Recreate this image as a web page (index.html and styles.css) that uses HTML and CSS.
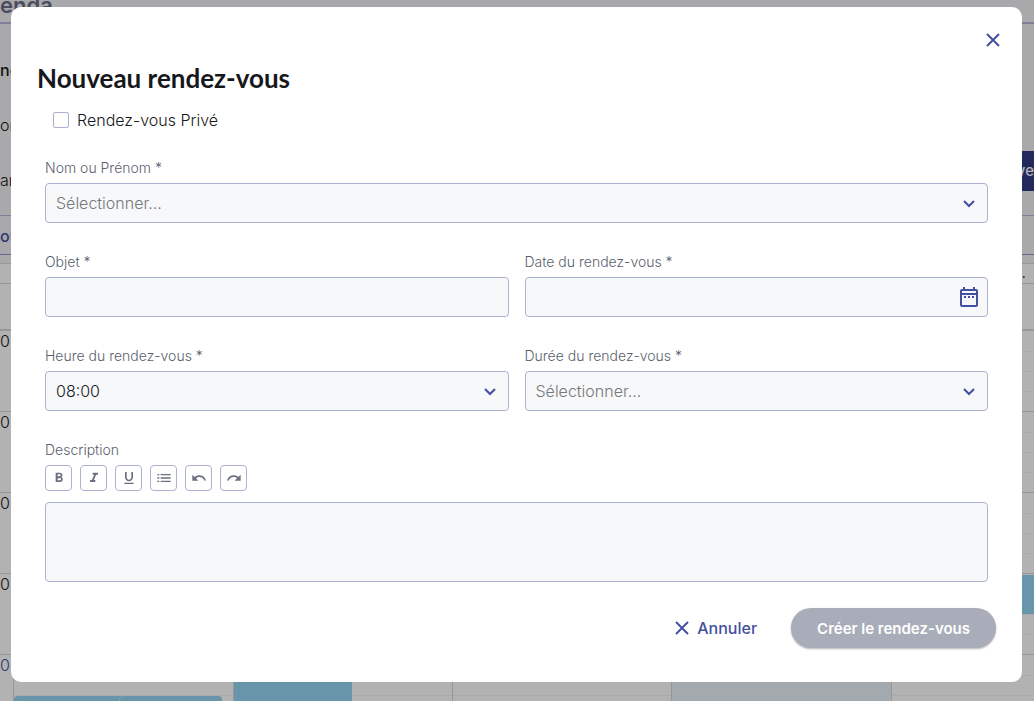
FILE: index.html
```html
<!DOCTYPE html>
<html lang="fr">
<head>
  <meta charset="UTF-8" />
  <meta name="viewport" content="width=device-width, initial-scale=1.0"/>
  <title>Nouveau rendez-vous</title>
  <link rel="stylesheet" href="styles.css">
</head>
<body>
  <div class="agenda">
    <div class="agenda-header">enda</div>
    <div class="agenda-filters">
      <div class="filters-left">
        <strong>nc</strong>
        <span>or</span>
        <span>ar</span>
      </div>
      <div class="agenda-new">ve</div>
    </div>
    <div class="agenda-tabs">ou</div>
    <div class="calendar">
      <div class="calendar-head"><span>.</span></div>
      <div class="calendar-allday"></div>
      <div class="calendar-grid">
        <div class="hours">
          <span>0</span>
          <span>0</span>
          <span>0</span>
          <span>0</span>
          <span class="now">0</span>
        </div>
        <div class="day">
          <div class="event event-left"></div>
          <div class="event event-right"></div>
        </div>
        <div class="day"><div class="event event-half"></div></div>
        <div class="day"></div>
        <div class="day today"></div>
        <div class="day"><div class="event event-short"></div></div>
      </div>
    </div>
  </div>

  <div class="overlay">
    <form class="modal" role="dialog" aria-labelledby="modalTitle">
      <div class="modal-top">
        <button type="button" class="icon-btn" aria-label="Fermer">
          <svg class="cross" viewBox="0 0 14 14"><path d="M1 1l12 12M13 1L1 13"/></svg>
        </button>
      </div>
      <h1 id="modalTitle">Nouveau rendez-vous</h1>

      <div class="fields">
        <div class="private">
          <input type="checkbox" id="private">
          <label for="private">Rendez-vous Privé</label>
        </div>

        <div class="field wide">
          <label for="name">Nom ou Prénom *</label>
          <div class="control">
            <select id="name" class="empty"><option>Sélectionner...</option></select>
            <svg class="chevron" viewBox="0 0 12 8"><path d="M1 1l5 5 5-5"/></svg>
          </div>
        </div>

        <div class="field">
          <label for="subject">Objet *</label>
          <div class="control"><input type="text" id="subject"></div>
        </div>

        <div class="field">
          <label for="date">Date du rendez-vous *</label>
          <div class="control">
            <input type="text" id="date">
            <button type="button" class="date-btn" aria-label="Choisir une date">
              <svg viewBox="0 0 18 20">
                <path class="line" d="M2 3h14q1 0 1 1v14q0 1-1 1H2q-1 0-1-1V4q0-1 1-1zM1 7h16"/>
                <path class="solid" d="M3 0h2v3H3zM13 0h2v3h-2zM4 9h2v2H4zM8 9h2v2H8zM12 9h2v2h-2z"/>
              </svg>
            </button>
          </div>
        </div>

        <div class="field">
          <label for="time">Heure du rendez-vous *</label>
          <div class="control">
            <select id="time"><option>08:00</option></select>
            <svg class="chevron" viewBox="0 0 12 8"><path d="M1 1l5 5 5-5"/></svg>
          </div>
        </div>

        <div class="field">
          <label for="duration">Durée du rendez-vous *</label>
          <div class="control">
            <select id="duration" class="empty"><option>Sélectionner...</option></select>
            <svg class="chevron" viewBox="0 0 12 8"><path d="M1 1l5 5 5-5"/></svg>
          </div>
        </div>

        <div class="field wide">
          <label for="description">Description</label>
          <div class="toolbar">
            <button type="button" aria-label="Gras"><svg viewBox="0 0 24 24"><path d="M15.6 10.79c.97-.67 1.65-1.77 1.65-2.79 0-2.26-1.75-4-4-4H7v14h7.04c2.09 0 3.71-1.7 3.71-3.79 0-1.52-.86-2.82-2.15-3.42zM10 6.5h3c.83 0 1.5.67 1.5 1.5s-.67 1.5-1.5 1.5h-3v-3zm3.5 9H10v-3h3.5c.83 0 1.5.67 1.5 1.5s-.67 1.5-1.5 1.5z"/></svg></button>
            <button type="button" aria-label="Italique"><svg viewBox="0 0 24 24"><path d="M10 4v3h2.21l-3.42 8H6v3h8v-3h-2.21l3.42-8H18V4z"/></svg></button>
            <button type="button" aria-label="Souligné"><svg viewBox="0 0 24 24"><path d="M12 17c3.31 0 6-2.69 6-6V3h-2.5v8c0 1.93-1.57 3.5-3.5 3.5S8.5 12.93 8.5 11V3H6v8c0 3.31 2.69 6 6 6zm-7 2v2h14v-2H5z"/></svg></button>
            <button type="button" aria-label="Liste"><svg viewBox="0 0 24 24"><path d="M2 6h3v2H2zM2 11h3v2H2zM2 16h3v2H2zM7 6h15v2H7zM7 11h15v2H7zM7 16h15v2H7z"/></svg></button>
            <button type="button" aria-label="Annuler la saisie"><svg viewBox="0 0 24 24"><path d="M12.5 8c-2.65 0-5.05.99-6.9 2.6L2 7v9h9l-3.62-3.62c1.39-1.16 3.16-1.88 5.12-1.88 3.54 0 6.55 2.31 7.6 5.5l2.37-.78C21.08 11.03 17.15 8 12.5 8z"/></svg></button>
            <button type="button" aria-label="Rétablir"><svg viewBox="0 0 24 24"><path d="M18.4 10.6C16.55 8.99 14.15 8 11.5 8c-4.65 0-8.58 3.03-9.96 7.22L3.9 16c1.05-3.19 4.05-5.5 7.6-5.5 1.95 0 3.73.72 5.12 1.88L13 16h9V7l-3.6 3.6z"/></svg></button>
          </div>
          <textarea id="description"></textarea>
        </div>
      </div>

      <div class="modal-footer">
        <button type="button" class="cancel">
          <svg class="cross" viewBox="0 0 14 14"><path d="M1 1l12 12M13 1L1 13"/></svg>
          Annuler
        </button>
        <button type="submit" class="submit" disabled>Créer le rendez-vous</button>
      </div>
    </form>
  </div>
</body>
</html>
```

FILE: styles.css
```css
* {
  box-sizing: border-box;
}

:root {
  --primary: #4350a0;
  --border: #adb2d2;
  --input: #f6f8fa;
  --muted: #6b6f80;
  --event: #95d6f2;
}

body {
  margin: 0;
  height: 100vh;
  overflow: hidden;
  font-family: Inter, sans-serif;
  font-size: 16px;
  font-weight: 300;
  color: #17181c;
}

button, input, select, textarea {
  font: inherit;
  color: inherit;
  margin: 0;
}

button {
  display: flex;
  align-items: center;
  justify-content: center;
  padding: 0;
  border: none;
  background: none;
  cursor: pointer;
}

/* Agenda */
.agenda {
  height: 100vh;
  overflow: hidden;
  background: #f2f3f6;
}

.agenda-header {
  display: flex;
  align-items: flex-end;
  height: 24px;
  padding-bottom: 4px;
  border-bottom: 2px solid #b3b7da;
  font-size: 22px;
  font-weight: 600;
  color: #6a6e86;
}

.agenda-filters {
  display: flex;
  justify-content: space-between;
  height: 192px;
  border-bottom: 1px solid #b3b7da;
}

.filters-left {
  display: flex;
  flex-direction: column;
  gap: 31px;
  padding-top: 34px;
  line-height: 24px;
}

.filters-left strong {
  font-weight: 500;
}

.agenda-new {
  width: 14px;
  height: 40px;
  margin-top: 127px;
  background: #333c84;
  color: #fff;
  font-size: 15px;
  font-weight: 500;
  line-height: 40px;
  text-align: right;
  direction: rtl;
}

.agenda-tabs {
  height: 39px;
  margin-bottom: 8px;
  border-bottom: 1px solid #8f96cc;
  color: var(--primary);
  font-weight: 500;
  line-height: 40px;
}

.calendar {
  border-top: 1px solid #d8d8d8;
  background: #fff;
}

.calendar-head {
  display: flex;
  justify-content: flex-end;
  height: 20px;
  padding-right: 8px;
  border-bottom: 1px solid #d8d8d8;
  line-height: 16px;
}

.calendar-allday {
  height: 47px;
  border-bottom: 2px solid #d8d8d8;
}

.calendar-grid {
  display: grid;
  grid-template-columns: 13px 220fr 219fr 219fr 220fr 143fr;
  height: 405px;
}

.hours span {
  display: block;
  height: 81px;
  border-bottom: 1px solid #d8d8d8;
  line-height: 20px;
}

.hours .now {
  color: var(--primary);
}

.day {
  position: relative;
  border-left: 1px solid #d8d8d8;
  background: repeating-linear-gradient(transparent 0 20px, #f3f3f3 20px 21px, transparent 21px 40px, #f3f3f3 40px 41px, transparent 41px 60px, #f3f3f3 60px 61px, transparent 61px 80px, #d8d8d8 80px 81px);
}

.today {
  background-color: #e9f4fb;
}

.event {
  position: absolute;
  background: var(--event);
}

.event-left {
  top: 365px;
  left: 0;
  width: 50%;
  height: 60px;
  border-radius: 4px;
}

.event-right {
  top: 365px;
  left: 48%;
  width: 47%;
  height: 60px;
  border-left: 1px solid #b9e6f9;
  border-radius: 4px;
}

.event-half {
  top: 324px;
  left: 0;
  width: 54%;
  height: 90px;
}

.event-short {
  top: 244px;
  right: 0;
  left: 0;
  height: 39px;
}

/* Modal */
.overlay {
  position: fixed;
  inset: 0;
  padding: 7px 12px 19px 11px;
  background: rgba(0, 0, 0, 0.3);
}

.modal {
  padding: 19px 26px 34px;
  border-radius: 10px;
  background: #fff;
}

.modal-top {
  display: flex;
  justify-content: flex-end;
  margin-right: -12px;
}

.icon-btn {
  width: 30px;
  height: 28px;
}

.cross {
  width: 14px;
  height: 14px;
  fill: none;
  stroke: var(--primary);
  stroke-width: 2;
}

h1 {
  margin: 8px 0 14px;
  font-family: Lato, sans-serif;
  font-size: 26px;
  font-weight: 700;
  line-height: 32px;
}

.fields {
  display: grid;
  grid-template-columns: 1fr 1fr;
  gap: 29px 16px;
  padding: 0 8px;
}

.private {
  grid-column: 1 / -1;
  display: flex;
  align-items: center;
  gap: 8px;
  height: 24px;
  margin-bottom: -3px;
  padding-left: 8px;
}

.private input {
  appearance: none;
  width: 16px;
  height: 16px;
  border: 1px solid var(--border);
  border-radius: 2px;
  background: #fff;
}

.private input:checked {
  background: var(--primary);
}

.wide {
  grid-column: 1 / -1;
}

.field > label {
  display: block;
  margin-bottom: 5px;
  font-size: 14px;
  line-height: 20px;
  color: #5b5f6e;
}

.control {
  position: relative;
}

.control input, .control select, textarea {
  display: block;
  width: 100%;
  height: 40px;
  padding: 0 10px;
  border: 1px solid var(--border);
  border-radius: 4px;
  background: var(--input);
}

.control select {
  appearance: none;
}

.control .empty {
  color: #777;
}

.chevron {
  position: absolute;
  top: 17px;
  right: 13px;
  width: 12px;
  height: 8px;
  fill: none;
  stroke: var(--primary);
  stroke-width: 2;
  pointer-events: none;
}

.date-btn {
  position: absolute;
  top: 0;
  right: 0;
  width: 38px;
  height: 40px;
}

.date-btn svg {
  width: 18px;
  height: 20px;
}

.line {
  fill: none;
  stroke: var(--primary);
  stroke-width: 2;
}

.solid {
  fill: var(--primary);
}

.toolbar {
  display: flex;
  gap: 8px;
  margin-bottom: 11px;
}

.toolbar button {
  width: 27px;
  height: 26px;
  border: 1px solid var(--border);
  border-radius: 4px;
}

.toolbar svg {
  width: 16px;
  height: 16px;
  fill: var(--muted);
}

.control input:focus, .control select:focus, textarea:focus {
  outline: 1px solid var(--primary);
}

textarea {
  height: 80px;
  padding: 10px;
  resize: none;
}

.modal-footer {
  display: flex;
  justify-content: flex-end;
  gap: 34px;
  margin-top: 26px;
}

.cancel {
  gap: 8px;
  color: var(--primary);
  font-weight: 500;
}

.submit {
  height: 40px;
  padding: 0 26px;
  border-radius: 20px;
  background: #a9adba;
  box-shadow: 0 1px 2px rgba(0, 0, 0, 0.3);
  color: #fff;
  font-size: 15px;
  font-weight: 600;
}
```
